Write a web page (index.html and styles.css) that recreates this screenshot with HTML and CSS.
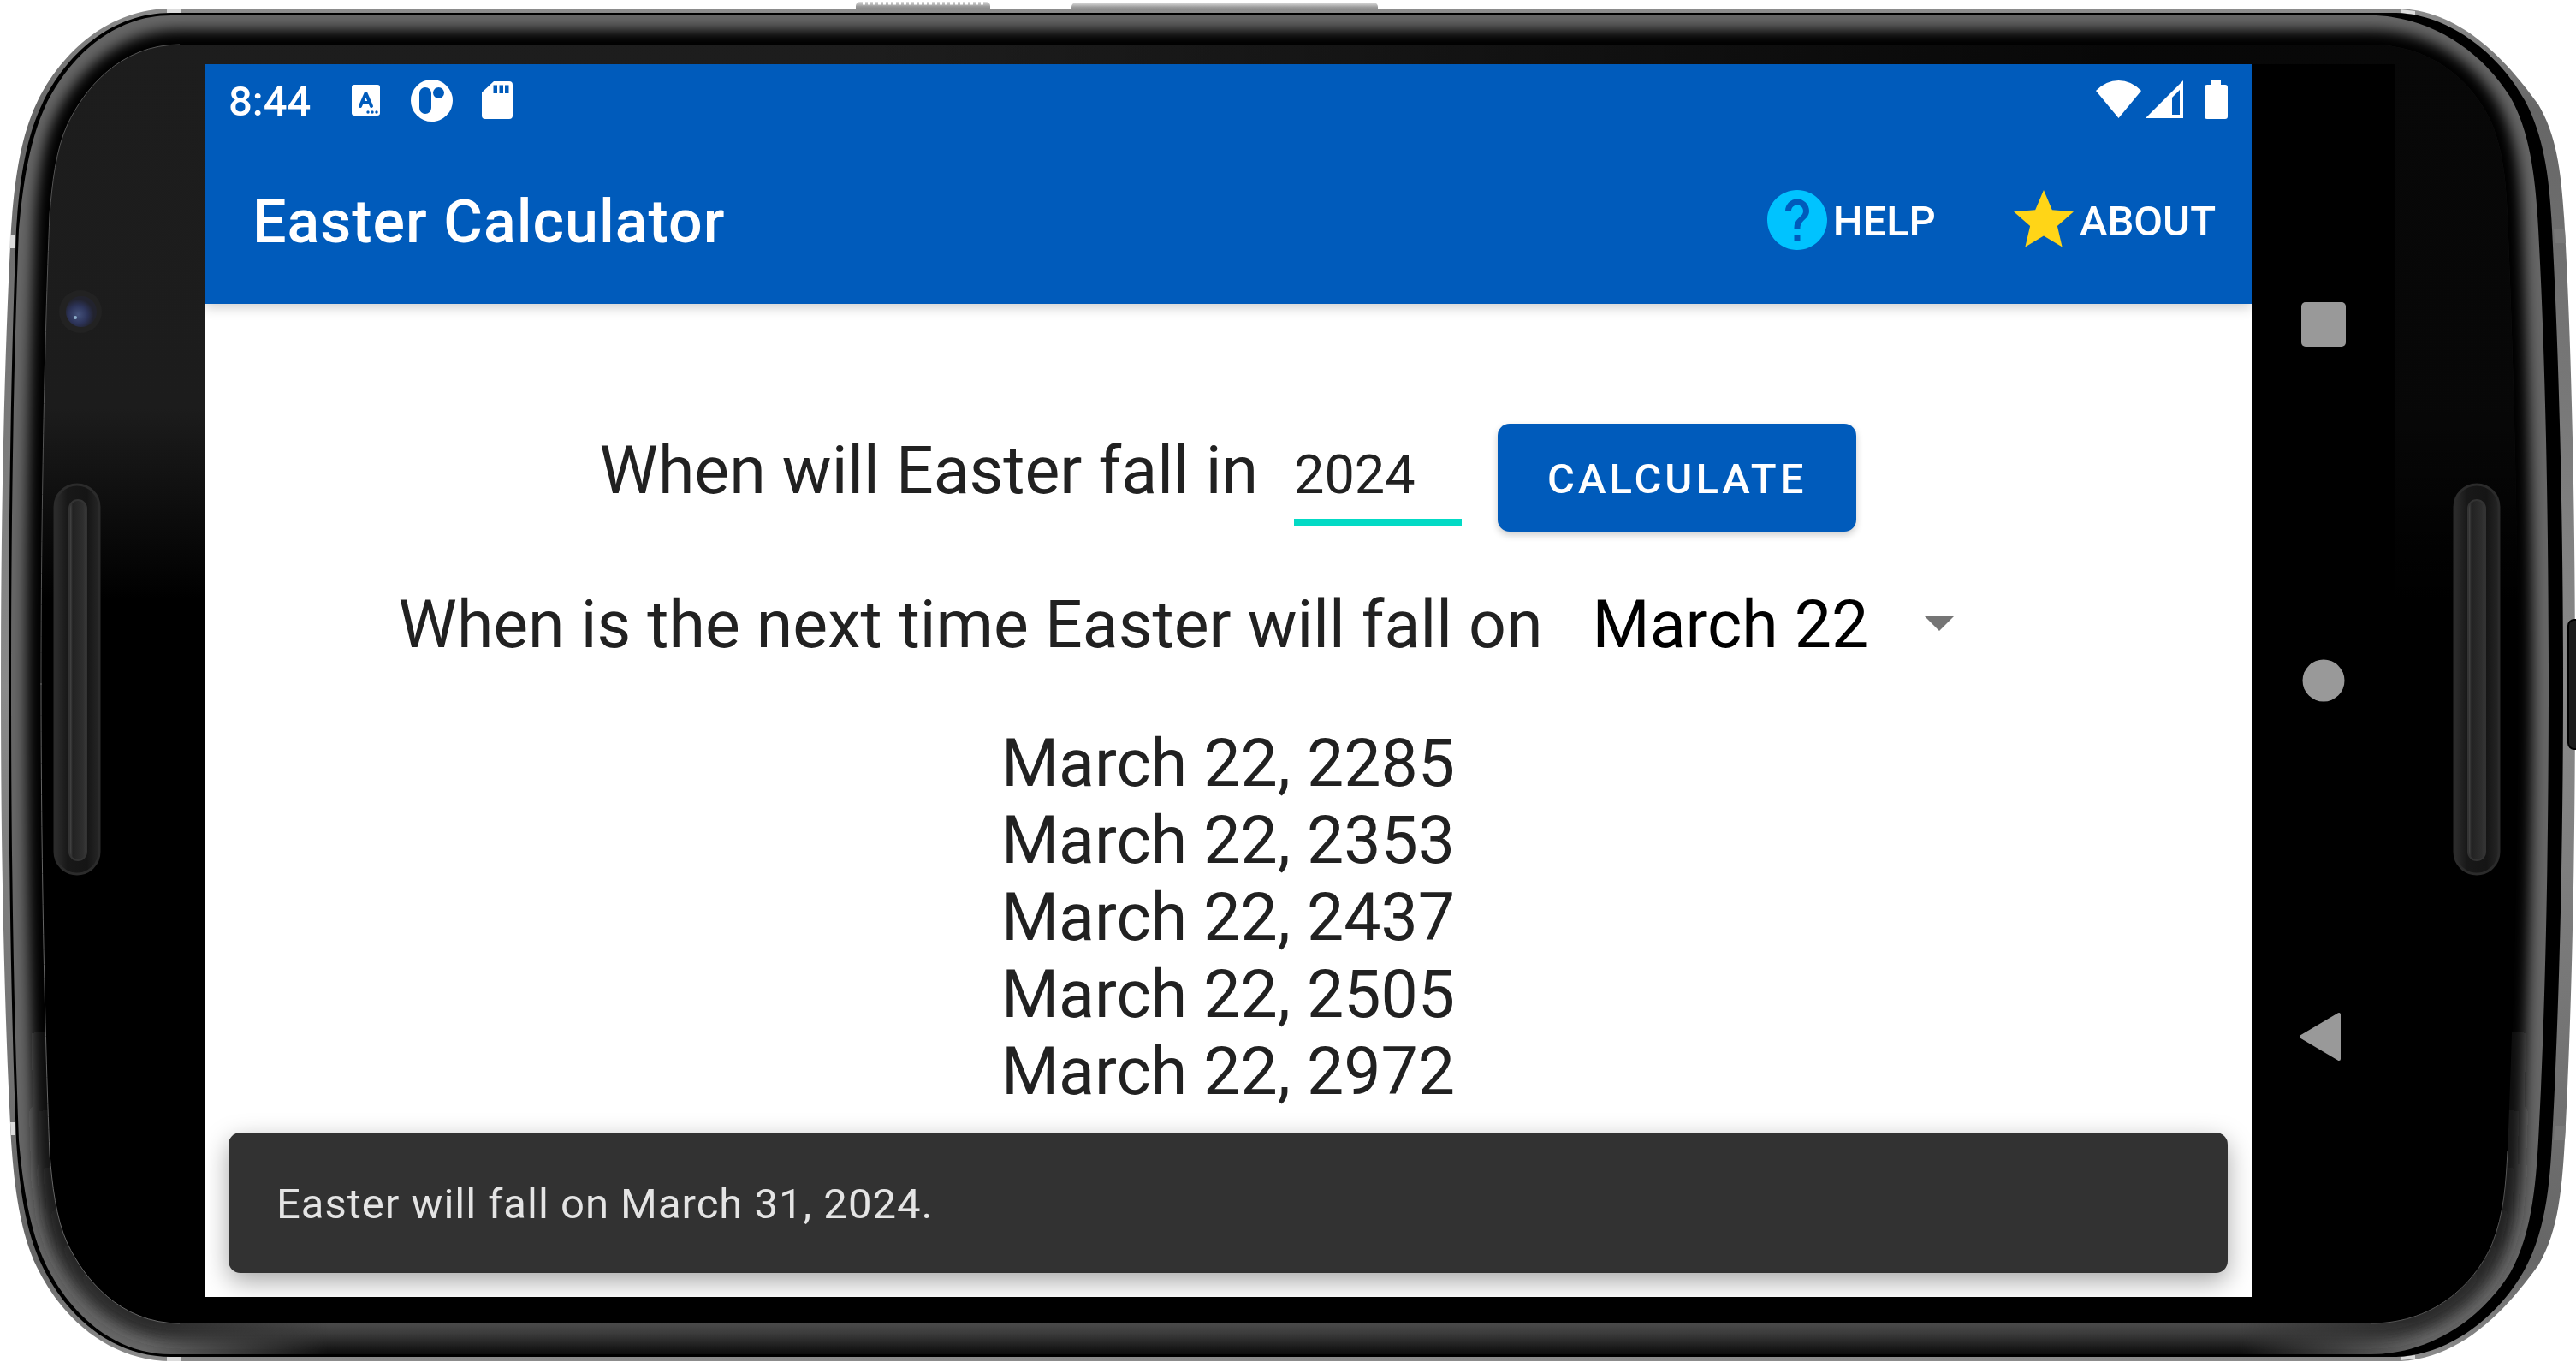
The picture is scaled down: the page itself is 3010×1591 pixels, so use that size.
FILE: index.html
```html
<!DOCTYPE html>
<html lang="en">
<head>
<meta charset="utf-8">
<title>Easter Calculator</title>
<link rel="stylesheet" href="styles.css">
</head>
<body>
<div class="phone">
  <svg class="phone-art" viewBox="0 0 3010 1591" preserveAspectRatio="none" aria-hidden="true">
    <defs>
      <path id="shell" d="M1,801V799C1,600 5,420 13,267C17,210 24,160 43,120C72,60 128,10 200,10H2805C2880,14 2932,75 2966,122C2990,163 2994,210 2998,287C3005,420 3009,600 3009,799V801Z"/>
      <path id="rim" d="M10,801V799C10,600 13,420 19,267C23,210 30,162 49,122C77,63 130,15 200,15H2800C2865,17 2922,66 2950,117C2977,167 2980,225 2983,287C2990,420 2995,600 2995,799V801Z"/>
      <path id="bezel" d="M13,801V799C13,600 16,420 22,268C27,212 35,163 53,124C81,66 132,18 200,18H2770C2840,18 2900,60 2933,113C2960,160 2964,225 2967,287C2974,420 2978,600 2978,799V801Z"/>
      <path id="glass" d="M48,801V799C48,600 52,400 58,250C61,215 65,175 79,145C98,105 140,52 210,52H2770C2850,52 2895,105 2912,145C2926,180 2928,215 2930,253C2936,400 2942,600 2942,799V801Z"/>
      <path id="glass-edge" d="M48,800C48,600 52,400 58,250C61,215 65,175 79,145C98,105 140,52 210,52"/>
      <clipPath id="bezel-clip">
        <use href="#bezel"/>
        <use href="#bezel" transform="translate(0 1600) scale(1 -1)"/>
      </clipPath>
      <linearGradient id="shell-fill" x1="0" y1="0" x2="0" y2="1">
        <stop offset="0" stop-color="#8c8c8c"/><stop offset=".15" stop-color="#666"/><stop offset="1" stop-color="#8a8a8a"/>
      </linearGradient>
      <linearGradient id="inner-dark" gradientUnits="userSpaceOnUse" x1="0" y1="1150" x2="0" y2="1500">
        <stop offset="0" stop-color="#000"/><stop offset="1" stop-color="#2a2a2a"/>
      </linearGradient>
      <linearGradient id="glass-fill" gradientUnits="userSpaceOnUse" x1="0" y1="0" x2="0" y2="1591">
        <stop offset="0" stop-color="#1d1d1d"/><stop offset=".3" stop-color="#1c1c1c"/><stop offset=".44" stop-color="#000"/>
      </linearGradient>
      <linearGradient id="glass-shade" gradientUnits="userSpaceOnUse" x1="1000" y1="0" x2="2500" y2="0">
        <stop offset="0" stop-color="#000" stop-opacity="0"/><stop offset="1" stop-color="#000" stop-opacity=".74"/>
      </linearGradient>
      <linearGradient id="lip-fill" x1="0" y1="0" x2="0" y2="1">
        <stop offset="0" stop-color="#4a4a4a"/><stop offset=".3" stop-color="#3c3c3c"/><stop offset=".8" stop-color="#161616"/><stop offset="1" stop-color="#0a0a0a"/>
      </linearGradient>
      <linearGradient id="lip-fade" x1="0" y1="0" x2="1" y2="0">
        <stop offset="0" stop-color="#000"/><stop offset=".08" stop-color="#fff"/><stop offset=".92" stop-color="#fff"/><stop offset="1" stop-color="#000"/>
      </linearGradient>
      <mask id="lip-mask"><rect x="170" y="1540" width="2660" height="50" fill="url(#lip-fade)"/></mask>
      <linearGradient id="key-fill" x1="0" y1="0" x2="0" y2="1">
        <stop offset="0" stop-color="#ddd"/><stop offset=".4" stop-color="#999"/><stop offset="1" stop-color="#666"/>
      </linearGradient>
      <linearGradient id="slot-fill" x1="0" y1="0" x2="1" y2="0">
        <stop offset="0" stop-color="#2e2e2e"/><stop offset=".28" stop-color="#181818"/><stop offset=".72" stop-color="#151515"/><stop offset="1" stop-color="#262626"/>
      </linearGradient>
      <linearGradient id="grille-fill" x1="0" y1="0" x2="1" y2="0">
        <stop offset="0" stop-color="#505050"/><stop offset=".2" stop-color="#222"/><stop offset=".8" stop-color="#2e2e2e"/><stop offset="1" stop-color="#3a3a3a"/>
      </linearGradient>
      <radialGradient id="lens-fill" cx=".4" cy=".6">
        <stop offset="0" stop-color="#44527c"/><stop offset=".6" stop-color="#2c3358"/><stop offset="1" stop-color="#22232e"/>
      </radialGradient>
      <filter id="soft" filterUnits="userSpaceOnUse" x="-60" y="-60" width="3130" height="1720"><feGaussianBlur stdDeviation="8"/></filter>
    </defs>

    <rect x="1000" y="2" width="157" height="14" rx="5" fill="url(#key-fill)"/>
    <path d="M1008,3H1150" stroke="#fff" stroke-width="5" stroke-dasharray="3 3"/>
    <rect x="1252" y="3" width="358" height="14" rx="5" fill="url(#key-fill)"/>

    <g fill="url(#shell-fill)">
      <use href="#shell"/>
      <use href="#shell" transform="translate(0 1600) scale(1 -1)"/>
    </g>
    <g fill="#dcdcdc">
      <path d="M195,11H211V15H195ZM2805,11L2822,13V17L2805,15ZM195,1585H211V1590H195ZM2805,1585L2822,1583V1587L2805,1589ZM12,274H18L17,290H11ZM12,1311H17L18,1326H13Z"/>
      <path fill="#777" d="M2984,268H2997L2998,284H2985ZM2985,1315H2998L2997,1332H2984Z"/>
    </g>
    <use href="#rim"/>
    <use href="#rim" transform="translate(0 1600) scale(1 -1)"/>
    <g clip-path="url(#bezel-clip)">
      <rect width="3010" height="1591" fill="#666"/>
      <g filter="url(#soft)" stroke-width="34" stroke-linejoin="round">
        <use href="#glass" stroke="#000"/>
        <path fill="url(#inner-dark)" stroke="url(#inner-dark)" d="M48,799C48,1000 52,1200 58,1350C61,1385 65,1425 79,1455C98,1495 140,1548 210,1548H2770C2850,1548 2895,1495 2912,1455C2926,1420 2928,1385 2930,1347C2936,1200 2942,1000 2942,799Z"/>
      </g>
      <rect x="170" y="1546" width="2660" height="38" fill="url(#lip-fill)" mask="url(#lip-mask)"/>
    </g>
    <use href="#glass" fill="url(#glass-fill)"/>
    <use href="#glass" fill="url(#glass-shade)"/>
    <use href="#glass" transform="translate(0 1598) scale(1 -1)"/>
    <use href="#glass-edge" fill="none" stroke="#555" stroke-width="1"/>
    <use href="#glass-edge" fill="none" stroke="#666" stroke-width="1" transform="translate(0 1598) scale(1 -1)"/>
    <path d="M2770,1546C2850,1546 2895,1493 2912,1453C2926,1418 2928,1383 2930,1345" fill="none" stroke="#555"/>

    <circle cx="94" cy="364" r="25" fill="#222"/>
    <circle cx="95" cy="364" r="18" fill="url(#lens-fill)"/>
    <circle cx="88" cy="371" r="2" fill="#8fb0cc"/>
    <rect x="64" y="566" width="52" height="455" rx="26" fill="url(#slot-fill)" stroke="#2b2b2b" stroke-width="3"/>
    <rect x="81" y="584" width="20" height="421" rx="10" fill="url(#grille-fill)" stroke="#333" stroke-width="2"/>
    <rect x="2868" y="566" width="52" height="455" rx="26" fill="url(#slot-fill)" stroke="#2b2b2b" stroke-width="3"/>
    <rect x="2884" y="584" width="20" height="421" rx="10" fill="url(#grille-fill)" stroke="#333" stroke-width="2"/>
    <rect x="3001" y="724" width="20" height="151" rx="7" fill="#1c1c1c" stroke="#000" stroke-width="2"/>
  </svg>

  <div class="screen">
    <header class="app-header">
      <div class="status-bar">
        <span class="clock">8:44</span>
        <svg class="status-icon" viewBox="0 0 49 49" aria-hidden="true">
          <rect x="8" y="6" width="33" height="36" rx="3" fill="#fff"/>
          <path d="M18,31L24.500,16L31,31M20,27H29" fill="none" stroke="#005bbb" stroke-width="4" stroke-linecap="round" stroke-linejoin="round"/>
          <g fill="#005bbb"><circle cx="27" cy="38" r="1.700"/><circle cx="32" cy="38" r="1.700"/><circle cx="37" cy="38" r="1.700"/></g>
        </svg>
        <svg class="status-icon" viewBox="0 0 49 49" aria-hidden="true">
          <circle cx="24.500" cy="24.500" r="24.500" fill="#fff"/>
          <rect x="10" y="9" width="14" height="31" rx="7" fill="#005bbb"/>
          <circle cx="32.500" cy="15.500" r="6.500" fill="#005bbb"/>
        </svg>
        <svg class="status-icon" viewBox="0 0 49 49" aria-hidden="true">
          <path fill="#fff" fill-rule="evenodd" d="M20,2H38Q42,2 42,6V42Q42,46 38,46H10Q6,46 6,42V15ZM19.500,6.500V16H24V6.500ZM26.500,6.500V16H31V6.500ZM33,6.500V16H37.500V6.500Z"/>
        </svg>
        <div class="system-icons">
          <svg width="53" height="46" viewBox="0 0 53 46" aria-hidden="true"><path fill="#fff" d="M0,12Q12,0 26.500,0T53,12L26.500,44Z"/></svg>
          <svg width="44" height="46" viewBox="0 0 44 46" aria-hidden="true"><path fill="#fff" fill-rule="evenodd" d="M44,0V44H0ZM40,11L31,20V40H40Z"/></svg>
          <svg class="battery" width="27" height="46" viewBox="0 0 27 46" aria-hidden="true"><path fill="#fff" d="M8,0H19V5H24Q27,5 27,8V42Q27,45 24,45H3Q0,45 0,42V8Q0,5 3,5H8Z"/></svg>
        </div>
      </div>
      <div class="toolbar">
        <h1 class="title">Easter Calculator</h1>
        <button class="action" type="button">
          <svg class="action-icon" viewBox="0 0 24 24" aria-hidden="true"><path fill="#00c3ff" d="M12 2C6.480 2 2 6.480 2 12s4.480 10 10 10 10-4.480 10-10S17.520 2 12 2zm1 17h-2v-2h2v2zm2.070-7.750l-.9.920C13.450 12.900 13 13.500 13 15h-2v-.5c0-1.100.450-2.100 1.170-2.830l1.240-1.260c.370-.360.590-.860.590-1.410 0-1.100-.9-2-2-2s-2 .9-2 2H8c0-2.210 1.790-4 4-4s4 1.790 4 4c0 .880-.360 1.680-.930 2.250z"/></svg>
          <span class="action-text">HELP</span>
        </button>
        <button class="action" type="button">
          <svg class="action-icon" viewBox="0 0 24 24" aria-hidden="true"><path fill="#ffd517" d="M12 17.270L18.180 21l-1.640-7.030L22 9.240l-7.190-.610L12 2 9.190 8.630 2 9.240l5.460 4.730L5.820 21z"/></svg>
          <span class="action-text">ABOUT</span>
        </button>
      </div>
    </header>

    <main class="content">
      <form class="row" onsubmit="return false">
        <label for="year">When will Easter fall in</label>
        <input class="year" id="year" type="text" inputmode="numeric" value="2024">
        <button class="calculate" type="submit">CALCULATE</button>
      </form>
      <div class="row">
        <label for="date">When is the next time Easter will fall on</label>
        <div class="spinner">
          <select id="date"><option>March 22</option></select>
          <svg class="spinner-arrow" viewBox="0 0 34 17" aria-hidden="true"><path fill="#757575" d="M0,0H34L17,17Z"/></svg>
        </div>
      </div>
      <ul class="results">
        <li>March 22, 2285</li>
        <li>March 22, 2353</li>
        <li>March 22, 2437</li>
        <li>March 22, 2505</li>
        <li>March 22, 2972</li>
      </ul>
    </main>

    <div class="snackbar" role="status">Easter will fall on March 31, 2024.</div>
  </div>

  <nav class="system-nav" aria-label="System navigation">
    <button type="button" aria-label="Overview"><svg width="58" height="58" viewBox="0 0 58 58"><rect x="3" y="3" width="52" height="52" rx="5" fill="#999"/></svg></button>
    <button type="button" aria-label="Home"><svg width="58" height="58" viewBox="0 0 58 58"><circle cx="29" cy="29" r="24.500" fill="#999"/></svg></button>
    <button type="button" aria-label="Back"><svg width="58" height="58" viewBox="0 0 58 58"><path d="M3,29L47,3V55Z" fill="#999" stroke="#999" stroke-width="4" stroke-linejoin="round"/></svg></button>
  </nav>
</div>
</body>
</html>
```
FILE: styles.css
```css
* {
  box-sizing: border-box;
}

body {
  margin: 0;
  background: #fff;
  color: #212121;
  font-family: Roboto, "Noto Sans", sans-serif;
}

button,
input,
select {
  margin: 0;
  border: 0;
  padding: 0;
  background: none;
  color: inherit;
  font: inherit;
}

svg {
  display: block;
}

.phone {
  position: relative;
  display: grid;
  grid-template-columns: 1fr 168px;
  min-height: 100vh;
  padding: 75px 211px 76px 239px;
}

.phone-art {
  position: absolute;
  inset: 0;
  width: 100%;
  height: 100%;
}

.screen {
  position: relative;
  display: flex;
  flex-direction: column;
  overflow: hidden;
  background: #fff;
}

.app-header {
  background: #005bbb;
  color: #fff;
  font-size: 49px;
  font-weight: 500;
  box-shadow: 0 4px 14px rgba(0, 0, 0, 0.2);
}

.status-bar {
  display: flex;
  align-items: center;
  gap: 28px;
  height: 84px;
  padding: 0 28px;
}

.clock {
  margin-right: 12px;
  padding-top: 2px;
}

.status-icon {
  width: 49px;
  height: 49px;
}

.system-icons {
  display: flex;
  gap: 5px;
  margin-left: auto;
}

.battery {
  margin-left: 20px;
}

.toolbar {
  display: flex;
  align-items: center;
  height: 196px;
  padding-left: 56px;
}

.title {
  margin: 0 auto 0 0;
  padding-top: 4px;
  font-size: 70px;
  font-weight: 500;
  letter-spacing: 1px;
}

.action {
  display: flex;
  align-items: center;
  padding: 0 42px;
}

.action-icon {
  width: 84px;
  height: 84px;
}

.action-text {
  padding-top: 2px;
}

.content {
  display: flex;
  flex-direction: column;
  align-items: center;
  padding: 140px 28px 196px;
  font-size: 77px;
  line-height: 90px;
}

.row {
  display: flex;
  align-items: baseline;
  gap: 42px;
  margin-bottom: 64px;
}

.year {
  width: 196px;
  padding-bottom: 14px;
  border-bottom: 8px solid #03dac5;
  outline: 0;
  font-size: 63px;
  line-height: 74px;
}

.calculate {
  height: 126px;
  padding: 4px 58px 0;
  border-radius: 14px;
  background: #005bbb;
  color: #fff;
  font-size: 49px;
  font-weight: 500;
  letter-spacing: 4px;
  box-shadow: 0 4px 8px rgba(0, 0, 0, 0.2);
}

.spinner {
  display: grid;
  align-items: center;
  width: 560px;
}

.spinner select,
.spinner-arrow {
  grid-area: 1 / 1;
}

.spinner select {
  appearance: none;
  padding-left: 16px;
  color: #000;
}

.spinner-arrow {
  justify-self: end;
  width: 34px;
  height: 17px;
  margin: 0 121px 4px 0;
  pointer-events: none;
}

.results {
  margin: 8px 0 0;
  padding: 0;
  list-style: none;
}

.snackbar {
  position: absolute;
  right: 28px;
  bottom: 28px;
  left: 28px;
  padding: 55px 56px 51px;
  border-radius: 14px;
  background: #323232;
  color: #e4e4e4;
  font-size: 49px;
  line-height: 58px;
  letter-spacing: 1px;
  box-shadow: 0 10px 30px rgba(0, 0, 0, 0.35);
}

.system-nav {
  position: relative;
  display: grid;
  grid-template-rows: repeat(3, 1fr);
  place-items: center;
  padding: 96px 0;
  background: #000;
}
```
